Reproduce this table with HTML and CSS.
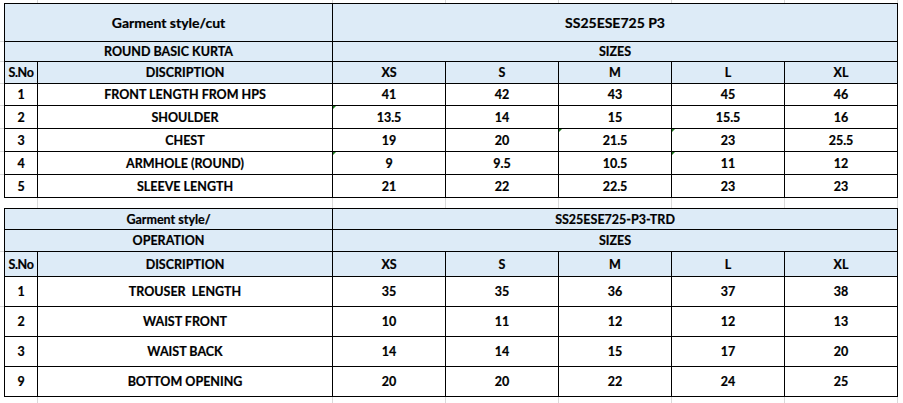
FILE: index.html
```html
<!DOCTYPE html>
<html lang="en">
<head>
<meta charset="utf-8">
<title>Garment measurement sheet</title>
<link rel="stylesheet" href="styles.css">
</head>
<body>
<div class="sheet">
  <table class="spec">
    <colgroup>
      <col class="c-no"><col class="c-desc"><col class="c-size"><col class="c-size"><col class="c-size"><col class="c-size"><col class="c-size">
    </colgroup>
    <tr class="h38 head title">
      <td colspan="2">Garment style/cut</td>
      <td colspan="5">SS25ESE725 P3</td>
    </tr>
    <tr class="h20 head">
      <td colspan="2">ROUND BASIC KURTA</td>
      <td colspan="5">SIZES</td>
    </tr>
    <tr class="h22 head">
      <td class="sno">S.No</td>
      <td>DISCRIPTION</td>
      <td>XS</td><td>S</td><td>M</td><td>L</td><td>XL</td>
    </tr>
    <tr class="h22">
      <td>1</td><td>FRONT LENGTH FROM HPS</td>
      <td>41</td><td>42</td><td>43</td><td>45</td><td>46</td>
    </tr>
    <tr class="h23">
      <td>2</td><td>SHOULDER</td>
      <td class="flag">13.5</td><td>14</td><td>15</td><td>15.5</td><td>16</td>
    </tr>
    <tr class="h23">
      <td>3</td><td>CHEST</td>
      <td>19</td><td>20</td><td class="flag">21.5</td><td class="flag">23</td><td>25.5</td>
    </tr>
    <tr class="h23">
      <td>4</td><td>ARMHOLE (ROUND)</td>
      <td class="flag">9</td><td>9.5</td><td>10.5</td><td class="flag">11</td><td>12</td>
    </tr>
    <tr class="h23">
      <td>5</td><td>SLEEVE LENGTH</td>
      <td>21</td><td>22</td><td>22.5</td><td>23</td><td>23</td>
    </tr>
  </table>

  <table class="spec second">
    <colgroup>
      <col class="c-no"><col class="c-desc"><col class="c-size"><col class="c-size"><col class="c-size"><col class="c-size"><col class="c-size">
    </colgroup>
    <tr class="h21 head">
      <td colspan="2">Garment style/</td>
      <td colspan="5">SS25ESE725-P3-TRD</td>
    </tr>
    <tr class="h22 head">
      <td colspan="2">OPERATION</td>
      <td colspan="5">SIZES</td>
    </tr>
    <tr class="h25 head">
      <td class="sno">S.No</td>
      <td>DISCRIPTION</td>
      <td>XS</td><td>S</td><td>M</td><td>L</td><td>XL</td>
    </tr>
    <tr class="h30">
      <td>1</td><td class="pre">TROUSER  LENGTH</td>
      <td>35</td><td>35</td><td>36</td><td>37</td><td>38</td>
    </tr>
    <tr class="h30">
      <td>2</td><td>WAIST FRONT</td>
      <td>10</td><td>11</td><td>12</td><td>12</td><td>13</td>
    </tr>
    <tr class="h30">
      <td>3</td><td>WAIST BACK</td>
      <td>14</td><td>14</td><td>15</td><td>17</td><td>20</td>
    </tr>
    <tr class="h30">
      <td>9</td><td>BOTTOM OPENING</td>
      <td>20</td><td>20</td><td>22</td><td>24</td><td>25</td>
    </tr>
  </table>
</div>
</body>
</html>
```

FILE: styles.css
```css
html, body {
  margin: 0;
  padding: 0;
  background: #ffffff;
}

.sheet {
  width: 903px;
  height: 403px;
  overflow: hidden;
  box-sizing: border-box;
  padding: 3px 0 0 4px;
  background-color: #ffffff;
  background-repeat: no-repeat;
  background-image:
    linear-gradient(#d9d9d9, #d9d9d9),
    linear-gradient(#d9d9d9, #d9d9d9),
    linear-gradient(#d9d9d9, #d9d9d9),
    linear-gradient(#d9d9d9, #d9d9d9),
    linear-gradient(#d9d9d9, #d9d9d9),
    linear-gradient(#d9d9d9, #d9d9d9),
    linear-gradient(#d9d9d9, #d9d9d9),
    linear-gradient(#d9d9d9, #d9d9d9),
    linear-gradient(#d9d9d9, #d9d9d9),
    linear-gradient(#d9d9d9, #d9d9d9),
    linear-gradient(#d9d9d9, #d9d9d9),
    linear-gradient(#d9d9d9, #d9d9d9),
    linear-gradient(#d9d9d9, #d9d9d9),
    linear-gradient(#d9d9d9, #d9d9d9),
    linear-gradient(#d9d9d9, #d9d9d9),
    linear-gradient(#d9d9d9, #d9d9d9);
  background-size:
    1px 100%, 1px 100%, 1px 100%, 1px 100%, 1px 100%, 1px 100%, 1px 100%,
    4px 1px, 4px 1px, 4px 1px, 4px 1px, 4px 1px, 4px 1px, 4px 1px, 4px 1px, 4px 1px;
  background-position:
    37px 0, 332px 0, 445px 0, 558px 0, 671px 0, 784px 0, 897px 0,
    0 41px, 0 61px, 0 83px, 0 105px, 0 128px, 0 151px, 0 174px, 0 251px, 0 306px;
}

.spec {
  border-collapse: collapse;
  table-layout: fixed;
  width: 894px;
  background: #ffffff;
  font-family: Lato, "Liberation Sans", sans-serif;
  font-weight: 700;
  font-size: 12.5px;
  color: #000000;
  -webkit-text-stroke: 0.2px #000000;
}

.spec.second {
  margin-top: 10px;
}

.c-no { width: 33px; }
.c-desc { width: 295px; }
.c-size { width: 113px; }

.spec td {
  border: 1px solid #000000;
  padding: 1px 0 0 0;
  text-align: center;
  vertical-align: middle;
  white-space: nowrap;
  line-height: 14px;
  position: relative;
}

.spec .head td {
  background: #ddebf7;
}

.spec .title td {
  font-size: 14px;
}

.spec td.sno {
  letter-spacing: -0.3px;
}

.spec td.pre {
  white-space: pre;
}

.spec td.flag::before {
  content: "";
  position: absolute;
  left: 0;
  top: 0;
  width: 0;
  height: 0;
  border-top: 3px solid #1e7a1e;
  border-right: 3px solid transparent;
}

.h20 { height: 20px; }
.h21 { height: 21px; }
.h22 { height: 22px; }
.h23 { height: 23px; }
.h25 { height: 25px; }
.h30 { height: 30px; }
.h38 { height: 38px; }
```
